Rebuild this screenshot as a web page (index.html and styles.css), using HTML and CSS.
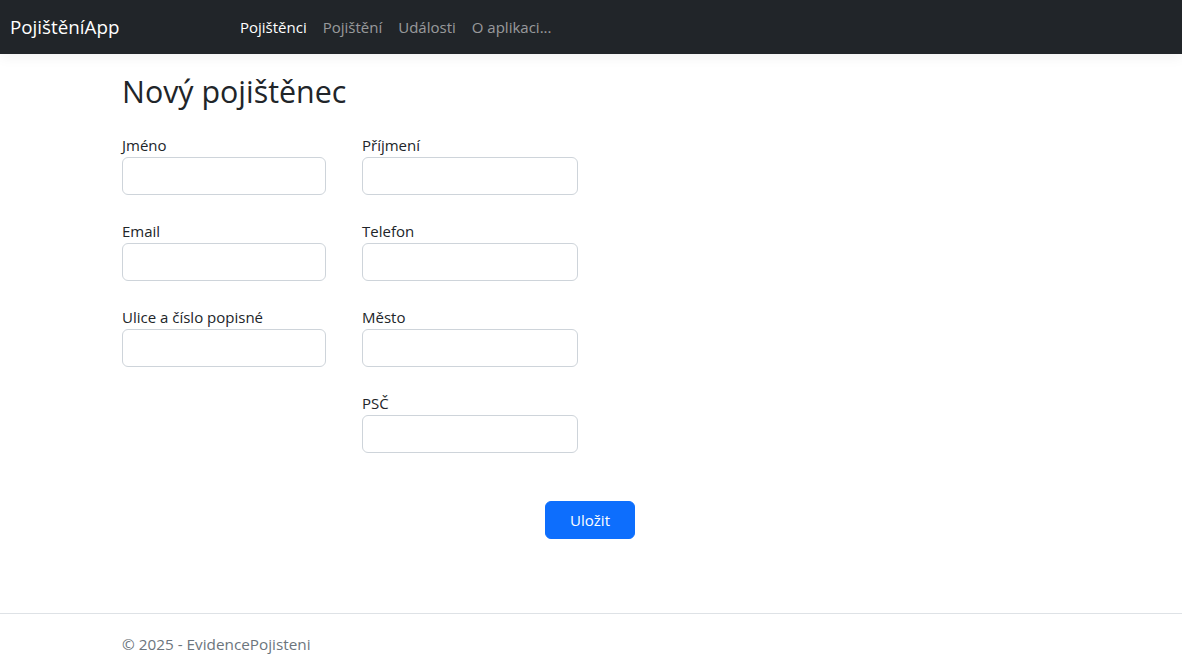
FILE: index.html
```html
<!DOCTYPE html>
<html lang="cs">
<head>
<meta charset="utf-8">
<title>Nový pojištěnec - PojištěníApp</title>
<link rel="stylesheet" href="styles.css">
</head>
<body>
<header class="navbar">
  <a class="brand" href="#">PojištěníApp</a>
  <nav class="nav-links">
    <a class="nav-link active" href="#">Pojištěnci</a>
    <a class="nav-link" href="#">Pojištění</a>
    <a class="nav-link" href="#">Události</a>
    <a class="nav-link" href="#">O aplikaci...</a>
  </nav>
</header>
<main class="container">
  <h1 class="title">Nový pojištěnec</h1>
  <form class="form">
    <div class="grid">
      <div class="group"><label class="label">Jméno</label><input class="input" type="text"></div>
      <div class="group"><label class="label">Příjmení</label><input class="input" type="text"></div>
      <div class="group"><label class="label">Email</label><input class="input" type="text"></div>
      <div class="group"><label class="label">Telefon</label><input class="input" type="text"></div>
      <div class="group"><label class="label">Ulice a číslo popisné</label><input class="input" type="text"></div>
      <div class="group"><label class="label">Město</label><input class="input" type="text"></div>
      <div class="group empty"></div>
      <div class="group"><label class="label">PSČ</label><input class="input" type="text"></div>
    </div>
    <div class="actions">
      <button class="btn" type="button">Uložit</button>
    </div>
  </form>
</main>
<footer class="footer">
  <div class="container">© 2025 - EvidencePojisteni</div>
</footer>
</body>
</html>
```
FILE: styles.css
```css
html, body {
  margin: 0;
  padding: 0;
}
body {
  font-family: "Open Sans", "Noto Sans", sans-serif;
  font-size: 15px;
  line-height: 24px;
  color: #212529;
  background: #fff;
}
.navbar {
  height: 54px;
  background: #212529;
  display: flex;
  align-items: center;
  padding-left: 10px;
  box-shadow: 0 4px 12px rgba(0, 0, 0, 0.05);
}
.brand {
  color: #fff;
  text-decoration: none;
  font-size: 18.8px;
  line-height: 30px;
  width: 222px;
}
.nav-links {
  display: flex;
}
.nav-link {
  color: rgba(255, 255, 255, 0.55);
  text-decoration: none;
  padding: 8px;
}
.nav-link.active {
  color: #fff;
}
.container {
  padding-left: 122px;
}
.title {
  font-size: 30.4px;
  font-weight: 400;
  line-height: 38px;
  margin: 19px 0 0 0;
}
.form {
  width: 513px;
  margin-top: 22px;
}
.grid {
  display: grid;
  grid-template-columns: 204px 216px;
  column-gap: 36px;
}
.group {
  margin-bottom: 24px;
  display: flex;
  flex-direction: column;
}
.group.empty {
  height: 62px;
}
.label {
  display: block;
}
.input {
  height: 38px;
  box-sizing: border-box;
  border: 1px solid #ced4da;
  border-radius: 6px;
  font: inherit;
  padding: 6px 12px;
}
.actions {
  display: flex;
  justify-content: flex-end;
  padding-top: 24px;
}
.btn {
  background: #0d6efd;
  border: 1px solid #0d6efd;
  color: #fff;
  font: inherit;
  height: 38px;
  padding: 6px 24px;
  border-radius: 6px;
}
.footer {
  margin-top: 74px;
  border-top: 1px solid #dee2e6;
  line-height: 60px;
  color: #6c757d;
  white-space: nowrap;
  font-size: 15.3px;
}
```
